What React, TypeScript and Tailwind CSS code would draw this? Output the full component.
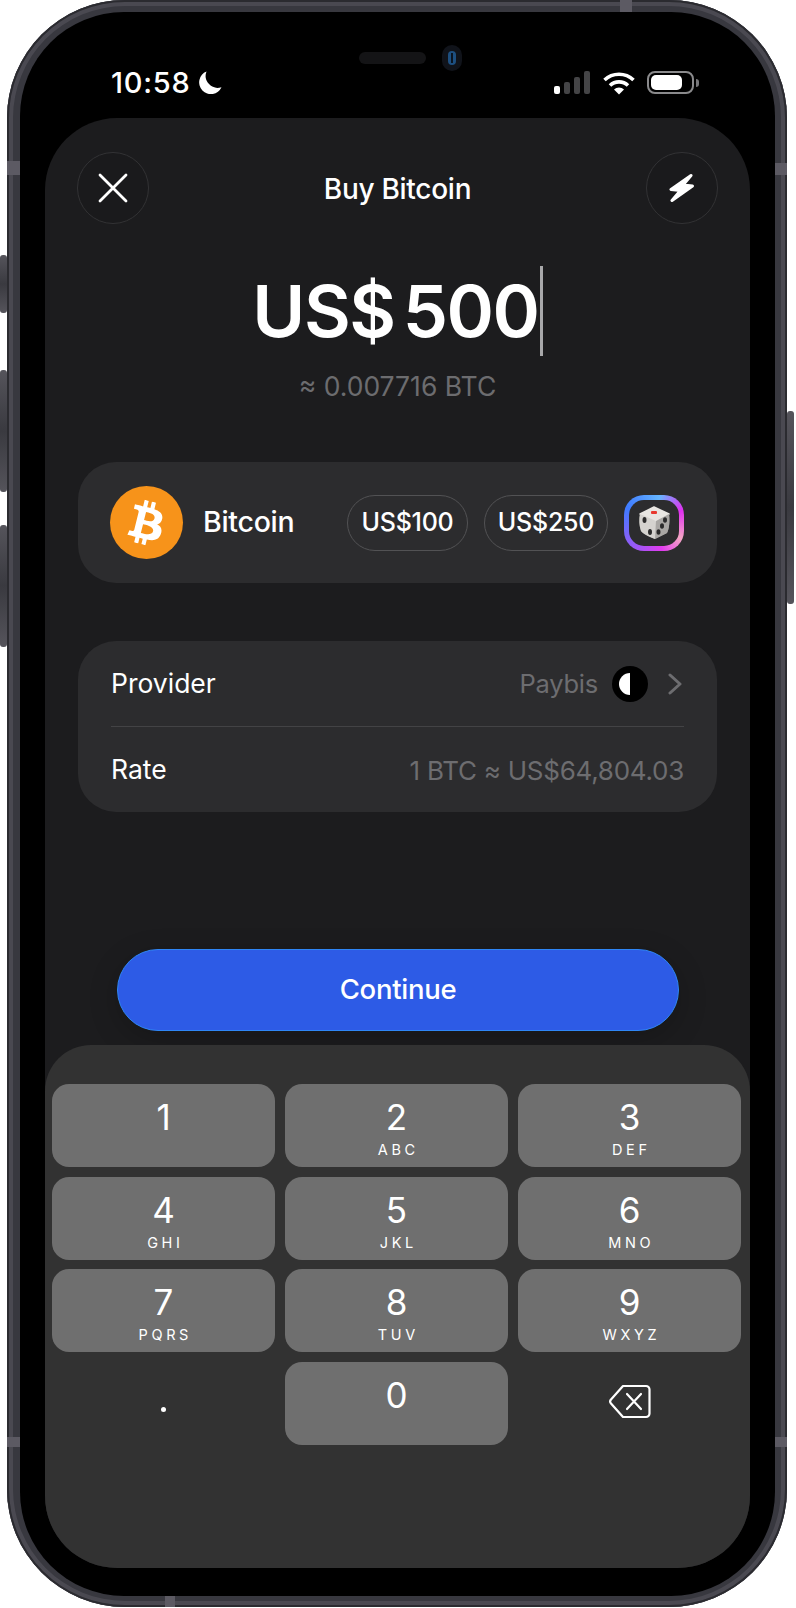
import { FaBtc } from "react-icons/fa";

const keys = [
  ["1", ""],
  ["2", "ABC"],
  ["3", "DEF"],
  ["4", "GHI"],
  ["5", "JKL"],
  ["6", "MNO"],
  ["7", "PQRS"],
  ["8", "TUV"],
  ["9", "WXYZ"],
];

function Key({ d, l }: { d: string; l: string }) {
  return (
    <div className="h-[83px] rounded-[17px] bg-[#6f6f6f] flex flex-col items-center pt-[11px] text-white">
      <span className="text-[35px] leading-[44px] font-normal">{d}</span>
      <span className="text-[14.5px] leading-[16px] mt-[3px] tracking-[0.25em] pl-[0.25em] font-normal">{l}</span>
    </div>
  );
}

function Band({ className }: { className: string }) {
  return <div className={"absolute bg-[#5c5a63] " + className} />;
}

function SideButton({ className }: { className: string }) {
  return (
    <div
      className={
        "absolute w-[7px] rounded-[3px] bg-gradient-to-b from-[#55545b] via-[#3a3a40] to-[#55545b] " + className
      }
    />
  );
}

function Dice() {
  return (
    <svg width="36" height="36" viewBox="0 0 36 36">
      <path d="M18 2 L33 9 C34 17 33 24 31 28 L19 34 C12 31 7 29 5 26 C3 20 3 14 4 9 Z" fill="#9d9c98" />
      <path d="M18 2 L33 9 L20 16 L4 9 Z" fill="#e8e6e2" stroke="#e8e6e2" strokeWidth="1.5" strokeLinejoin="round" />
      <path d="M20 16 L33 9 C34 17 33 24 31 28 L19 34 C19 28 19 22 20 16 Z" fill="#a9a7a4" />
      <path d="M4 9 L20 16 L19 34 C12 31 7 29 5 26 C3 20 3 14 4 9 Z" fill="#d5d3cf" />
      <rect x="15" y="6" width="6" height="3" rx="1" fill="#e8392f" />
      <ellipse cx="8.5" cy="15" rx="2" ry="3" fill="#2b2b2b" />
      <ellipse cx="14" cy="27" rx="2" ry="3" fill="#2b2b2b" />
      <ellipse cx="29" cy="15" rx="2" ry="2.8" fill="#2b2b2b" />
      <ellipse cx="26" cy="21" rx="2" ry="2.8" fill="#2b2b2b" />
      <ellipse cx="22.5" cy="27" rx="2" ry="2.8" fill="#2b2b2b" />
    </svg>
  );
}

export default function App() {
  return (
    <div className="relative w-[796px] h-[1608px] bg-white font-['Inter',_'Liberation_Sans',_sans-serif] overflow-hidden">
      <SideButton className="left-0 top-[255px] h-[58px]" />
      <SideButton className="left-0 top-[370px] h-[122px]" />
      <SideButton className="left-0 top-[525px] h-[122px]" />
      <SideButton className="left-[787px] top-[411px] h-[193px]" />

      <div className="relative ml-[7px] w-[780px] h-[1607px] rounded-[118px] bg-[#38383f] p-[12px_12px_11px_13px] shadow-[inset_0_0_0_2px_#2b2b30,inset_0_0_0_6px_#4a4951]">
        <Band className="left-0 top-[161px] w-[13px] h-[14px]" />
        <Band className="left-0 top-[1437px] w-[13px] h-[10px]" />
        <Band className="right-0 top-[163px] w-[12px] h-[12px]" />
        <Band className="right-0 top-[1437px] w-[12px] h-[10px]" />
        <Band className="left-[613px] top-0 w-[12px] h-[12px]" />
        <Band className="left-[158px] bottom-0 w-[10px] h-[11px]" />

        <div className="relative w-[755px] h-[1584px] rounded-[104px] bg-black flex flex-col pl-[25px] pr-[25px] pb-[28px]">
          {/* Speaker and camera */}
          <div className="absolute left-[339px] top-[40px] w-[67px] h-[12px] rounded-full bg-[#141416]" />
          <div className="absolute left-[422px] top-[33px] w-[20px] h-[26px] rounded-full bg-[#10131a] flex items-center justify-center">
            <div className="w-[8px] h-[14px] rounded-full bg-[#1d4f80] flex items-center justify-center">
              <div className="w-[2px] h-[10px] bg-[#0a1420]" />
            </div>
          </div>

          {/* Status bar */}
          <div className="h-[106px] shrink-0 flex items-start justify-between text-white pt-[59px] pl-[66px] pr-[1px]">
            <div className="flex items-center gap-[8px]">
              <span className="text-[29px] leading-[24px] font-medium tracking-[0.025em]">10:58</span>
              <svg width="24" height="24" viewBox="0 0 24 24" fill="#fff">
                <path d="M8.5 0.5 A11.7 11.7 0 1 0 23.5 16.2 A12 12 0 0 1 8.5 0.5 Z" />
              </svg>
            </div>
            <div className="flex items-start gap-[13px] mr-[50px]">
              <div className="flex items-end gap-[4px] h-[23px]">
                <div className="w-[6px] h-[8px] rounded-[2px] bg-white" />
                <div className="w-[6px] h-[12px] rounded-[2px] bg-[#444446]" />
                <div className="w-[6px] h-[17px] rounded-[2px] bg-[#444446]" />
                <div className="w-[6px] h-[23px] rounded-[2px] bg-[#444446]" />
              </div>
              <svg width="32" height="24" viewBox="0 0 32 24" fill="none" stroke="#fff" strokeWidth="3.6" strokeLinecap="butt" className="mr-[-1px]">
                <path d="M1.5 9 A21 21 0 0 1 30.5 9" />
                <path d="M7 14.5 A13 13 0 0 1 25 14.5" />
                <path d="M16 23.5 L11 18.5 A7 7 0 0 1 21 18.5 Z" fill="#fff" stroke="none" />
              </svg>
              <div className="flex items-center">
                <div className="w-[47px] h-[23px] rounded-[8px] border-2 border-[#8a8a8c] p-[2px] pr-[10px]">
                  <div className="w-full h-full rounded-[5px] bg-white" />
                </div>
                <div className="w-[3px] h-[8px] ml-[2px] rounded-r-[3px] bg-[#77777a]" />
              </div>
            </div>
          </div>

          {/* Screen */}
          <div className="flex-1 min-h-0 rounded-[72px] bg-[#1c1c1e] flex flex-col overflow-hidden">
            <div className="flex items-center justify-between pt-[34px] pl-[32px] pr-[32px] shrink-0">
              <div className="w-[72px] h-[72px] rounded-full bg-[#1a1a1c] border border-[#333335] flex items-center justify-center">
                <svg width="30" height="30" viewBox="0 0 30 30" stroke="#fff" strokeWidth="2.8" strokeLinecap="round">
                  <path d="M2 2 L28 28 M28 2 L2 28" />
                </svg>
              </div>
              <span className="text-white text-[28px] leading-[32px] font-medium tracking-[-0.01em] mt-[2px]">Buy Bitcoin</span>
              <div className="w-[72px] h-[72px] rounded-full bg-[#1a1a1c] border border-[#333335] flex items-center justify-center">
                <svg width="26" height="30" viewBox="0 0 26 30" fill="#fff" stroke="#fff" strokeWidth="3" strokeLinejoin="round">
                  <path d="M22 2.5 L2 16.5 L11.5 17.5 L3 27.5 L23.5 13 L14 12 Z" />
                </svg>
              </div>
            </div>

            <div className="mt-[42px] flex items-center justify-center h-[90px] shrink-0 text-white">
              <span className="text-[72px] leading-[90px] font-semibold tracking-[-0.02em]">
                US$<span className="ml-[8px]">500</span>
              </span>
              <div className="w-[3px] h-[90px] bg-[#a8a8aa] ml-[1px]" />
            </div>

            <div className="mt-[15px] text-center text-[26.5px] leading-[30px] text-[#6c6c6f] shrink-0">≈ 0.007716 BTC</div>

            <div className="mt-[61px] mx-[33px] h-[121px] shrink-0 rounded-[38px] bg-[#2c2c2e] flex items-center pl-[32px] pr-[33px]">
              <div className="w-[73px] h-[73px] rounded-full bg-[#f7931a] flex items-center justify-center">
                <FaBtc className="text-white w-[44px] h-[44px] rotate-[14deg]" />
              </div>
              <span className="ml-[20px] text-white text-[28.5px] font-[550] tracking-[-0.01em]">Bitcoin</span>
              <div className="ml-auto flex items-center">
                <div className="w-[121px] h-[56px] rounded-full border border-[#525254] flex items-center justify-center text-white text-[25px] font-medium tracking-[-0.01em]">
                  US$100
                </div>
                <div className="ml-[16px] w-[124px] h-[56px] rounded-full border border-[#525254] flex items-center justify-center text-white text-[25px] font-medium tracking-[-0.01em]">
                  US$250
                </div>
                <div className="ml-[16px] w-[60px] h-[56px] rounded-[20px] p-[5px] bg-[conic-gradient(from_300deg,#3f7bff,#66b6ff_20%,#e12ff0_35%,#f4a6c4_50%,#e23bf0_62%,#a455f5_75%,#3f7bff)]">
                  <div className="w-full h-full rounded-[15px] bg-[#2c2c2e] flex items-center justify-center">
                    <Dice />
                  </div>
                </div>
              </div>
            </div>

            <div className="mt-[58px] mx-[33px] h-[171px] shrink-0 rounded-[38px] bg-[#2c2c2e] flex flex-col px-[33px]">
              <div className="h-[85px] flex items-center text-[26.5px] shrink-0 pt-[1px] pr-[2px]">
                <span className="text-white">Provider</span>
                <span className="ml-auto text-[#6d6d70] text-[25.5px] tracking-[-0.01em]">Paybis</span>
                <div className="ml-[14px] w-[36px] h-[36px] rounded-full bg-black flex items-center justify-center">
                  <div className="w-[22px] h-[22px] rounded-full bg-[linear-gradient(90deg,#fff_50%,#000_50%)]" />
                </div>
                <svg width="14" height="22" viewBox="0 0 14 22" fill="none" stroke="#6d6d70" strokeWidth="3" strokeLinecap="round" strokeLinejoin="round" className="ml-[20px]">
                  <path d="M2 2 L12 11 L2 20" />
                </svg>
              </div>
              <div className="h-px bg-[#434345] shrink-0" />
              <div className="flex-1 flex items-center pt-[1px]">
                <span className="text-white text-[26.5px]">Rate</span>
                <span className="ml-auto text-[#6d6d70] text-[26px] tracking-[-0.01em]">1 BTC ≈ US$64,804.03</span>
              </div>
            </div>

            <div className="mt-[137px] ml-[72px] mr-[71px] h-[82px] shrink-0 rounded-[41px] bg-[#2d5be6] border border-[#2f86f5] flex items-center justify-center text-white text-[27.5px] font-[550] tracking-[-0.01em] shadow-[0_8px_30px_rgba(0,0,0,0.2)]">
              Continue
            </div>

            <div className="mt-[14px] flex-1 min-h-0 rounded-t-[46px] bg-[#323232] pl-[7px] pr-[9px] pt-[39px]">
              <div className="grid grid-cols-3 gap-x-[10px] gap-y-[9.6px]">
                {keys.map(([d, l]) => (
                  <Key key={d} d={d} l={l} />
                ))}
                <div className="h-[83px] flex items-center justify-center text-white">
                  <div className="w-[5px] h-[5px] rounded-full bg-white mt-[12px]" />
                </div>
                <Key d="0" l="" />
                <div className="h-[83px] flex items-center justify-center">
                  <svg width="42" height="35" viewBox="0 0 42 35" fill="none" stroke="#fff" strokeWidth="2.2" strokeLinecap="round" strokeLinejoin="round" className="mt-[-3px]">
                    <path d="M14 2 H37 A3.5 3.5 0 0 1 40.5 5.5 V29.5 A3.5 3.5 0 0 1 37 33 H14 L2 19.5 A3 3 0 0 1 2 15.5 Z" />
                    <path d="M18 10 L32 25 M32 10 L18 25" />
                  </svg>
                </div>
              </div>
            </div>
          </div>
        </div>
      </div>
    </div>
  );
}
